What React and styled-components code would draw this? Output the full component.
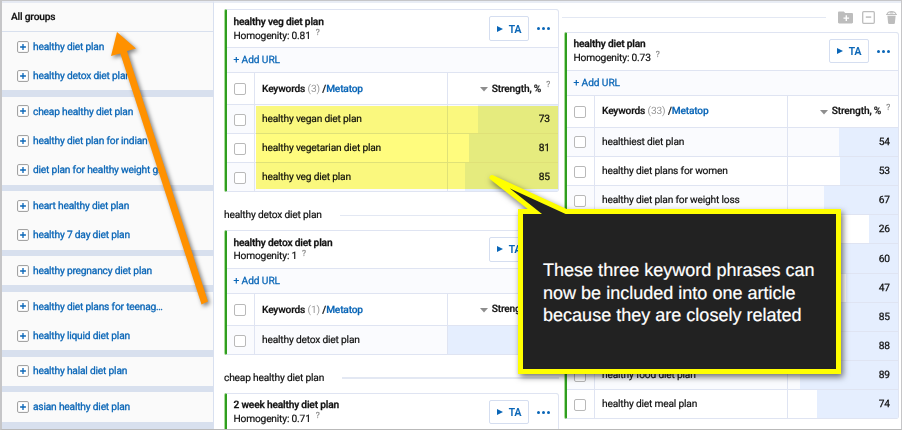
import styled, { createGlobalStyle, ThemeProvider } from 'styled-components';

const theme = {
    colors: {
        link: '#0a66b7',
        text: '#111',
        muted: '#999',
        border: '#dfe4f2',
        stripe: '#fafbfe',
        bar: '#e5eefe',
        green: '#2f9e1f',
        divider: '#d8e0ee',
    },
};

const GlobalStyle = createGlobalStyle`
    * {
        box-sizing: border-box;
    }

    body {
        margin: 0;
        background: #fff;
        font-family: Roboto, "Liberation Sans", sans-serif;
        font-size: 10.2px;
        letter-spacing: -0.18px;
        text-rendering: geometricPrecision;
    }
`;

const Page = styled.div`
    position: relative;
    display: flex;
    width: 902px;
    height: 430px;
    overflow: hidden;
    background: #fff;
    border: 1px solid #c6c6c8;
    border-left-width: 2px;
    border-bottom-color: #b9b9b9;
    color: ${({ theme }) => theme.colors.text};
    -webkit-text-stroke: 0.2px;
`;

const Sidebar = styled.aside`
    flex: none;
    width: 212px;
    height: 427.5px;
    border-top: 2px solid #e6eaf3;
    border-right: 1px solid #d8e0f0;
    background: ${({ theme }) => theme.colors.divider};
`;

const SidebarTitle = styled.div`
    height: 29px;
    padding: 1px 9px 0;
    line-height: 28px;
    font-weight: 500;
    background: #fafafa;
    border-bottom: 1px solid ${({ theme }) => theme.colors.divider};
`;

const Group = styled.ul`
    margin: 0 0 6.5px;
    padding: 0;
    list-style: none;
    background: #fafafa;
`;

const GroupItem = styled.li`
    display: flex;
    align-items: center;
    gap: 4px;
    height: 29.22px;
    padding: 1.4px 0 0 15px;
    color: ${({ theme }) => theme.colors.link};
    -webkit-text-stroke: 0.3px;

    & > svg {
        margin-top: -1.5px;
    }
`;

const Board = styled.main`
    display: flex;
    gap: 5px;
    padding: 0 3px 0 10px;
    border-top: 2px solid #e9edf5;
`;

const Column = styled.section`
    width: 335px;
    padding-top: ${({ $top }) => $top}px;
`;

const GroupHeading = styled.div`
    display: flex;
    align-items: center;
    gap: 18px;
    height: 37.8px;
    padding-top: 9.5px;

    &::after {
        content: "";
        flex: 1;
        height: 1.5px;
        margin-top: -1px;
        background: #e3e8f3;
    }
`;

const Toolbar = styled.div`
    display: flex;
    align-items: center;
    height: 28.6px;
    padding-right: 2.5px;
    color: #bdbdbd;

    & > svg {
        flex: none;
    }

    & > svg + svg {
        margin-left: 9.5px;
    }

    & > svg:last-child {
        margin-left: 10.5px;
    }
`;

const Rule = styled.div`
    flex: 1;
    height: 1.5px;
    margin: 0 12px 0 -2px;
    background: #e3e8f3;
`;

const CardWrapper = styled.div`
    width: 334px;
    margin-left: 1px;
    background: #fff;
    border: 1px solid ${({ theme }) => theme.colors.border};
    border-left: 2px solid ${({ theme }) => theme.colors.green};
    border-radius: 2px 3px 3px 2px;
    box-shadow: -1px 0 0 #a9dc98;
`;

const CardHeader = styled.div`
    display: flex;
    align-items: center;
    height: 38px;
    padding: 0 8px 0 6.5px;
    border-bottom: 1px solid ${({ theme }) => theme.colors.border};
`;

const CardTitle = styled.div`
    flex: 1;
    padding-top: 2px;
    line-height: 13.8px;

    & > strong {
        display: block;
        font-weight: 500;
        letter-spacing: -0.17px;
        -webkit-text-stroke: 0.3px;
    }
`;

const Help = styled.sup`
    position: relative;
    top: ${({ $top }) => $top || 0.5}px;
    margin-left: ${({ $gap }) => $gap || 5}px;
    line-height: 0;
    font-size: 8.5px;
    font-weight: 400;
    color: #8c8c8c;
`;

const RunButton = styled.button`
    display: flex;
    align-items: center;
    justify-content: center;
    gap: 6px;
    width: 40px;
    height: 24.5px;
    padding: 1px 0 0;
    background: #fff;
    border: 1px solid #d5def0;
    border-radius: 2px;
    font: 500 10.4px Roboto, sans-serif;
    color: ${({ theme }) => theme.colors.link};

    & > svg {
        margin-top: -1px;
    }
`;

const Dots = styled.div`
    display: flex;
    gap: 1.8px;
    margin-left: 8px;

    & > i {
        width: 3.1px;
        height: 3.1px;
        border-radius: 50%;
        background: ${({ theme }) => theme.colors.link};
    }
`;

const AddUrl = styled.div`
    height: 25px;
    padding: 1px 0 0 6.5px;
    line-height: 24px;
    background: ${({ theme }) => theme.colors.stripe};
    border-bottom: 1px solid ${({ theme }) => theme.colors.border};
    color: ${({ theme }) => theme.colors.link};
    letter-spacing: -0.1px;
    -webkit-text-stroke: 0.25px;
`;

const Row = styled.div`
    display: grid;
    grid-template-columns: 28px 193px 1fr;
    height: ${({ $head }) => ($head ? 32 : 29.2)}px;
    background: ${({ theme, $striped }) => ($striped ? theme.colors.stripe : '#fff')};
    border-bottom: 1px solid ${({ theme }) => theme.colors.border};

    &:last-child {
        height: 27.8px;
        border-bottom: 0;
    }
`;

const Cell = styled.div`
    display: flex;
    align-items: center;
    padding: 1.4px 0 0 7px;
    white-space: nowrap;
    border-right: 1px solid ${({ theme }) => theme.colors.border};
    font-weight: ${({ $bold }) => ($bold ? 500 : 400)};

    & > em {
        margin: 0 2.5px;
        font-style: normal;
        font-weight: 400;
        color: ${({ theme }) => theme.colors.muted};
        -webkit-text-stroke: 0;
    }

    & > a {
        color: ${({ theme }) => theme.colors.link};
    }
`;

const Checkbox = styled.span`
    width: 12px;
    height: 12px;
    background: #fff;
    border: 1.5px solid #b9b9b9;
    border-radius: 2px;
`;

const StrengthHead = styled.div`
    display: flex;
    align-items: center;
    justify-content: flex-end;
    padding: 1px 8px 0 0;
    font-weight: 500;

    & > svg {
        margin: 1px 4px 0 0;
    }
`;

const Strength = styled.div`
    display: flex;
    justify-content: flex-end;
`;

const Bar = styled.div`
    display: flex;
    align-items: center;
    justify-content: flex-end;
    padding: 1.4px 8px 0 0;
    background: ${({ theme }) => theme.colors.bar};
    letter-spacing: -0.1px;
    -webkit-text-stroke: 0.25px;
`;

const Marked = styled.div`
    position: relative;

    &::after {
        content: "";
        position: absolute;
        inset: 1px 0 2px 29px;
        background: #fffc7e;
        mix-blend-mode: multiply;
    }
`;

const ArrowLayer = styled.svg`
    position: absolute;
    left: -2px;
    top: -1px;
    filter: drop-shadow(2px 2px 2px rgba(0, 0, 0, 0.5));
`;

const Callout = styled.div`
    position: absolute;
    left: 516px;
    top: 208px;
    width: 323px;
    height: 165px;
    padding: 45px 20px 0;
    background: #222;
    border: 5px solid #ff0;
    filter: drop-shadow(2px 3px 3px rgba(0, 0, 0, 0.55));
    font: 18.05px/22.5px "Liberation Sans", sans-serif;
    letter-spacing: 0;
    color: #fff;
    white-space: nowrap;
    -webkit-text-stroke: 0.2px;

    & > svg {
        position: absolute;
        left: -35px;
        top: -45px;
    }
`;

const groups = [
    ['healthy diet plan', 'healthy detox diet plan'],
    ['cheap healthy diet plan', 'healthy diet plan for indian', 'diet plan for healthy weight g…'],
    ['heart healthy diet plan', 'healthy 7 day diet plan'],
    ['healthy pregnancy diet plan'],
    ['healthy diet plans for teenag…', 'healthy liquid diet plan'],
    ['healthy halal diet plan'],
    ['asian healthy diet plan'],
];

const vegRows = [
    ['healthy vegan diet plan', 73],
    ['healthy vegetarian diet plan', 81],
    ['healthy veg diet plan', 85],
];

const dietRows = [
    ['healthiest diet plan', 54],
    ['healthy diet plans for women', 53],
    ['healthy diet plan for weight loss', 67],
    ['', 26],
    ['', 60],
    ['', 47],
    ['', 85],
    ['', 88],
    ['healthy food diet plan', 89],
    ['healthy diet meal plan', 74],
];

const PlusIcon = () => (
    <svg width="12" height="12" viewBox="0 0 12 12" fill="none">
        <rect x="0.6" y="0.6" width="10.8" height="10.8" rx="1.2" fill="#fff" stroke="#9a9a9a" />
        <path d="M6 3.1v5.8M3.1 6h5.8" stroke="#0a66b7" strokeWidth="1.3" />
    </svg>
);

const FolderIcon = () => (
    <svg width="15" height="13" viewBox="0 0 15 13">
        <path d="M1.2 0.5h4.6l1.4 1.6h6.6c.7 0 1.2.4 1.2 1.1v8c0 .7-.5 1.2-1.2 1.2H1.2C.5 12.4 0 11.9 0 11.2V1.7C0 1 .5.5 1.2.5z" fill="currentColor" />
        <path d="M8.3 4.3v5.6M5.5 7.1h5.6" stroke="#fff" strokeWidth="1.4" />
    </svg>
);

const MinusIcon = () => (
    <svg width="13" height="13" viewBox="0 0 13 13" fill="none" stroke="currentColor" strokeWidth="1.3">
        <rect x="0.7" y="0.7" width="11.6" height="11.6" rx="1" />
        <path d="M3.8 6.1h5.4" strokeWidth="1.5" />
    </svg>
);

const TrashIcon = () => (
    <svg width="11" height="15" viewBox="0 0 12 15" fill="none">
        <path d="M1.5 5.6h9l-.8 8c-.1.7-.5 1-1.1 1H3.4c-.6 0-1-.3-1.1-1z" fill="currentColor" />
        <path d="M1 4.2C1.6 2.4 3.5 1 6 1s4.4 1.4 5 3.2z" stroke="currentColor" strokeWidth="1.1" />
        <path d="M0.3 4.3h11.4M4 2.4h4" stroke="currentColor" strokeWidth="1.2" />
    </svg>
);

const Keyword = ({ name, value, striped }) => (
    <Row $striped={striped}>
        <Cell><Checkbox /></Cell>
        <Cell>{name}</Cell>
        <Strength>
            <Bar style={{ width: `${value || 100}%` }}>{value}</Bar>
        </Strength>
    </Row>
);

const Card = ({ title, homogenity, count, children }) => (
    <CardWrapper>
        <CardHeader>
            <CardTitle>
                <strong>{title}</strong>
                Homogenity: {homogenity}<Help>?</Help>
            </CardTitle>
            <RunButton>
                <svg width="6" height="6" viewBox="0 0 6 6"><path d="M0 0l6 3-6 3z" fill="currentColor" /></svg>
                TA
            </RunButton>
            <Dots><i /><i /><i /></Dots>
        </CardHeader>
        {children && (
            <>
                <AddUrl>+ Add URL</AddUrl>
                <Row $head>
                    <Cell><Checkbox /></Cell>
                    <Cell $bold>Keywords <em>({count})</em> /<a>Metatop</a></Cell>
                    <StrengthHead>
                        <svg width="8" height="5" viewBox="0 0 8 5"><path d="M0 0h8L4 4.5z" fill="#8e8e8e" /></svg>
                        Strength, %<Help $gap={5} $top={-4}>?</Help>
                    </StrengthHead>
                </Row>
                {children}
            </>
        )}
    </CardWrapper>
);

const App = () => (
    <ThemeProvider theme={theme}>
        <GlobalStyle />
        <Page>
            <Sidebar>
                <SidebarTitle>All groups</SidebarTitle>
                {groups.map((items) => (
                    <Group key={items[0]}>
                        {items.map((item) => (
                            <GroupItem key={item}><PlusIcon />{item}</GroupItem>
                        ))}
                    </Group>
                ))}
            </Sidebar>
            <Board>
                <Column $top={6}>
                    <Card title="healthy veg diet plan" homogenity="0.81" count={3}>
                        <Marked>
                            {vegRows.map(([name, value], i) => (
                                <Keyword key={value} name={name} value={value} striped={i % 2 === 0} />
                            ))}
                        </Marked>
                    </Card>
                    <GroupHeading>healthy detox diet plan</GroupHeading>
                    <Card title="healthy detox diet plan" homogenity="1" count={1}>
                        <Keyword name="healthy detox diet plan" striped />
                    </Card>
                    <GroupHeading>cheap healthy diet plan</GroupHeading>
                    <Card title="2 week healthy diet plan" homogenity="0.71" />
                </Column>
                <Column $top={0}>
                    <Toolbar>
                        <Rule />
                        <FolderIcon />
                        <MinusIcon />
                        <TrashIcon />
                    </Toolbar>
                    <Card title="healthy diet plan" homogenity="0.73" count={33}>
                        {dietRows.map(([name, value], i) => (
                            <Keyword key={value} name={name} value={value} striped={i % 2 === 0} />
                        ))}
                    </Card>
                </Column>
            </Board>
            <ArrowLayer width="230" height="330" viewBox="0 0 230 330">
                <path d="M117 32L136 48.5 127 51 208 301.5 201.5 304.5 120.3 53.5 111 56z" fill="#ff9100" />
            </ArrowLayer>
            <Callout>
                <svg width="100" height="45" viewBox="0 0 100 45">
                    <path d="M52.5 47L4 8.5 88 47" fill="#222" stroke="#ff0" strokeWidth="5" strokeLinejoin="round" />
                </svg>
                These three keyword phrases can<br />
                now be included into one article<br />
                because they are closely related
            </Callout>
        </Page>
    </ThemeProvider>
);

export default App;
